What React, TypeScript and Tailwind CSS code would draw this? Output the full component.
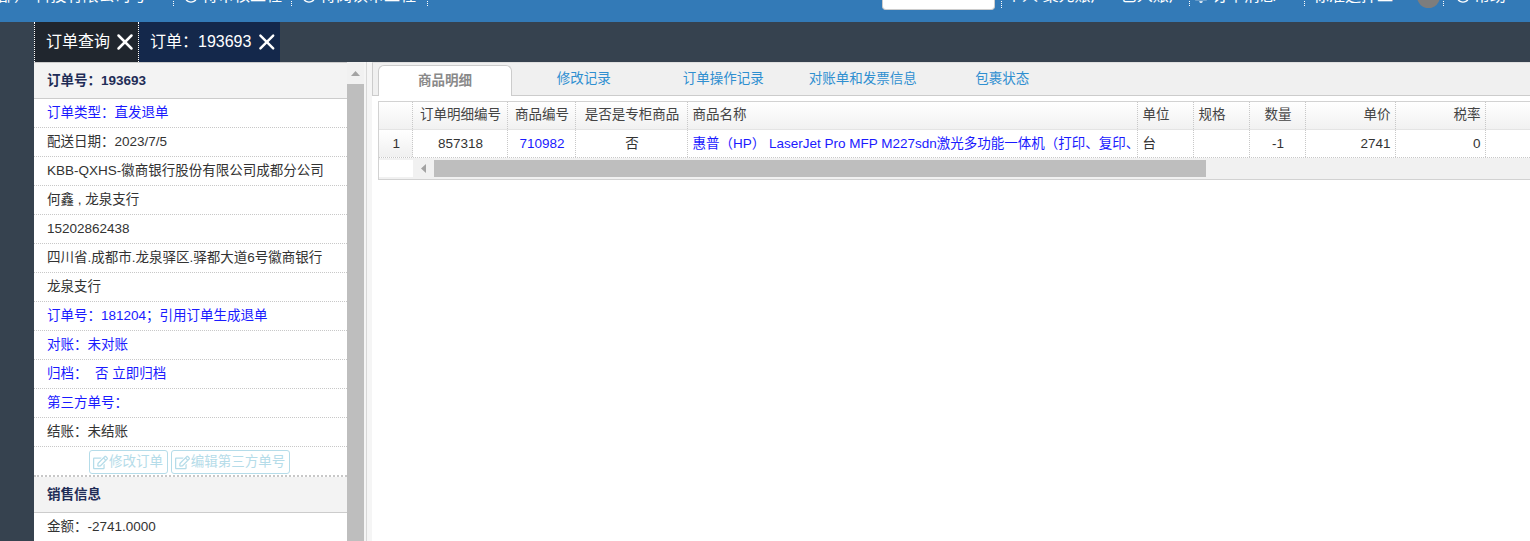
import React from "react";
import { X } from "lucide-react";
import { FaRegEdit, FaRegClock, FaRegBell } from "react-icons/fa";

const font = { fontFamily: '"Liberation Sans", "Noto Sans CJK SC", sans-serif' };

function Row({ children, blue, last }: { children: React.ReactNode; blue?: boolean; last?: boolean }) {
  return (
    <div className={`h-[29px] pl-[13px] leading-[27px] whitespace-nowrap border-b border-dotted border-[#c8c8c8] ${blue ? "text-[#1a1aff]" : "text-[#333]"} ${last ? "border-b-0" : ""}`}>
      {children}
    </div>
  );
}

function Seg({ w, children, sep = true }: { w: string; children?: React.ReactNode; sep?: boolean }) {
  return (
    <div className={`${w} h-[20px] shrink-0 flex items-center gap-[4px] whitespace-nowrap overflow-visible ${sep ? "border-r border-dotted border-white" : ""}`}>
      {children}
    </div>
  );
}

const center = "text-center pl-[6px] pr-[4px]";
const left = "text-left px-[5px]";
const right = "text-right pl-[5px] pr-[4px]";

const cols = [
  { w: "w-[33.5px]", h: "", c: "1", a: center, cc: "bg-[linear-gradient(to_bottom,#fff,#f0f0f0)]" },
  { w: "w-[95px]", h: "订单明细编号", c: "857318", a: center },
  { w: "w-[68px]", h: "商品编号", c: "710982", a: center, blue: true },
  { w: "w-[112px]", h: "是否是专柜商品", c: "否", a: center },
  { w: "w-[450px]", h: "商品名称", c: "惠普（HP） LaserJet Pro MFP M227sdn激光多功能一体机（打印、复印、", a: left, blue: true },
  { w: "w-[56px]", h: "单位", c: "台", a: left },
  { w: "w-[56px]", h: "规格", c: "", a: left },
  { w: "w-[56px]", h: "数量", c: "-1", a: center },
  { w: "w-[90px]", h: "单价", c: "2741", a: right },
  { w: "w-[90px]", h: "税率", c: "0", a: right },
];

const tabs = ["修改记录", "订单操作记录", "对账单和发票信息", "包裹状态"];

export default function App() {
  return (
    <div style={font} className="w-[1530px] h-[541px] overflow-hidden bg-white text-[13.5px] flex flex-col">
      {/* Top bar, scrolled mostly out of view */}
      <header className="h-[22px] shrink-0 bg-[#337ab7] overflow-hidden text-white text-[16px]">
        <div className="flex items-center -mt-[14px] h-[20px]">
          <Seg w="w-[174px]"><span className="-ml-[2px]">部） 科技有限公司号</span></Seg>
          <Seg w="w-[118px]"><FaRegClock className="ml-[10px] text-[14px] shrink-0" /><span>待审核工程</span></Seg>
          <Seg w="w-[136px]"><FaRegClock className="ml-[10px] text-[14px] shrink-0" /><span>待阅读审工程</span></Seg>
          <div className="w-[454px] shrink-0" />
          <div className="w-[113px] h-[24px] mt-[4px] shrink-0 bg-white rounded-[4px] border border-[#ccc] border-t-0" />
          <div className="w-[6px] shrink-0" />
          <Seg w="w-[189px]" sep><span className="pl-[4px] border-l border-dotted border-white">个人 聚元账户 · 已入账户</span></Seg>
          <Seg w="w-[115px]"><FaRegBell className="ml-[4px] text-[14px] shrink-0" /><span>订单消息</span></Seg>
          <Seg w="w-[139px]">
            <span className="pl-[8px]">标准选择工</span>
            <span className="w-[23px] h-[23px] rounded-full bg-[#7d7d7d] mt-[-2px] shrink-0 ml-[20px] translate-y-[1px]" />
          </Seg>
          <Seg w="w-[86px]" sep={false}><FaRegClock className="ml-[12px] text-[14px] shrink-0" /><span>帮助</span></Seg>
        </div>
      </header>

      {/* Tab bar */}
      <div className="h-[40px] shrink-0 bg-[#36424f] pl-[34px] flex text-white text-[16px]">
        <div className="w-[105px] bg-[#20262e] border-x border-dotted border-white flex items-center pl-[11px] gap-[2px] whitespace-nowrap">
          <span>订单查询</span>
          <X size={26} strokeWidth={2.3} />
        </div>
        <div className="w-[141px] bg-[#14284b] flex items-center pl-[11px] gap-[3px] whitespace-nowrap">
          <span>订单：193693</span>
          <X size={26} strokeWidth={2.3} />
        </div>
      </div>

      <div className="flex flex-1 min-h-0">
        <div className="w-[34px] shrink-0 bg-[#36424f]" />

        {/* Left panel */}
        <aside className="w-[313px] shrink-0 border-t border-[#ccc] overflow-hidden">
          <div className="h-[36px] bg-[#f3f3f3] border-b border-[#ccc] pl-[13px] leading-[35px] font-bold text-[#1f2d57]">订单号：193693</div>
          <Row blue>订单类型：直发退单</Row>
          <Row>配送日期：2023/7/5</Row>
          <Row>KBB-QXHS-徽商银行股份有限公司成都分公司</Row>
          <Row>何鑫 , 龙泉支行</Row>
          <Row>15202862438</Row>
          <Row>四川省.成都市.龙泉驿区.驿都大道6号徽商银行</Row>
          <Row>龙泉支行</Row>
          <Row blue>订单号：181204；引用订单生成退单</Row>
          <Row blue>对账：未对账</Row>
          <Row blue>归档：&nbsp; 否 立即归档</Row>
          <Row blue>第三方单号：</Row>
          <Row>结账：未结账</Row>
          <div className="h-[30px] border-b-[2px] border-dotted border-[#c8c8c8] flex justify-center items-start pt-[3px] gap-[3px] text-[#b5dce9] pr-[3px]">
            <button className="h-[24px] w-[79px] border border-[#b5dce9] rounded-[3px] flex items-center justify-center gap-[1px] whitespace-nowrap">
              <FaRegEdit className="text-[15px] shrink-0" />修改订单
            </button>
            <button className="h-[24px] w-[119px] border border-[#b5dce9] rounded-[3px] flex items-center justify-center gap-[1px] whitespace-nowrap">
              <FaRegEdit className="text-[15px] shrink-0" />编辑第三方单号
            </button>
          </div>
          <div className="h-[36px] bg-[#f3f3f3] border-b border-[#ccc] pl-[13px] leading-[35px] font-bold text-[#1f2d57]">销售信息</div>
          <Row last>金额：-2741.0000</Row>
        </aside>

        {/* Left scrollbar */}
        <div className="w-[17px] shrink-0 bg-[#f1f1f1] flex flex-col">
          <div className="h-[22px] shrink-0 flex items-center justify-center">
            <svg width="9" height="5" viewBox="0 0 9 5"><path d="M4.5 0L9 5H0z" fill="#a3a3a3" /></svg>
          </div>
          <div className="flex-1 bg-[#bebebe]" />
        </div>

        {/* Divider */}
        <div className="w-[8px] shrink-0 bg-[#f5f5f5] flex">
          <div className="w-[2px]" />
          <div className="w-px bg-[#d8d8d8]" />
        </div>

        {/* Right panel */}
        <main className="flex-1 min-w-0 overflow-hidden">
          <div className="h-[34px] bg-[#f0f0f0] border-t border-[#e0e0e0] border-b border-b-[#ccc] border-l border-l-[#ccc] flex items-end pl-[5px]">
            <div className="w-[134px] h-[31px] -mb-px mr-[2px] bg-white border border-[#ccc] border-b-0 rounded-t-[6px] flex items-center justify-center font-bold text-[#8a8a8a]">商品明细</div>
            {tabs.map((t) => (
              <div key={t} className="w-[139.5px] h-[31px] flex items-center justify-center text-[#2f8fd0] whitespace-nowrap">{t}</div>
            ))}
          </div>

          <div className="ml-[6px] mt-[5px] border-y border-[#d2d2d2] border-l border-l-[#d2d2d2] h-[79px] bg-white overflow-hidden">
            <div className="flex h-[28px] border-b border-[#e4e4e4] bg-[linear-gradient(to_bottom,#ffffff,#f1f1f1)] text-[#444]">
              {cols.map((c, i) => (
                <div key={i} className={`${c.w} shrink-0 border-r border-dotted border-[#c8c8c8] leading-[26px] whitespace-nowrap overflow-hidden ${c.a}`}>{c.h}</div>
              ))}
            </div>
            <div className="flex h-[28px] border-b border-dotted border-[#c8c8c8]">
              {cols.map((c, i) => (
                <div key={i} className={`${c.w} shrink-0 border-r border-dotted border-[#c8c8c8] leading-[27px] whitespace-nowrap overflow-hidden ${c.a} ${c.cc ?? ""} ${c.blue ? "text-[#1a1aff]" : "text-[#333]"}`}>{c.c}</div>
              ))}
            </div>
            <div className="flex h-[22px] bg-[#f1f1f1] pt-[2px]">
              <div className="w-[33.5px] h-[17px] shrink-0 bg-white" />
              <div className="w-[21px] h-[17px] shrink-0 flex items-center justify-center">
                <svg width="5" height="9" viewBox="0 0 5 9"><path d="M0 4.5L5 0V9z" fill="#a3a3a3" /></svg>
              </div>
              <div className="w-[772px] h-[17px] bg-[#bebebe]" />
            </div>
          </div>
        </main>
      </div>
    </div>
  );
}
